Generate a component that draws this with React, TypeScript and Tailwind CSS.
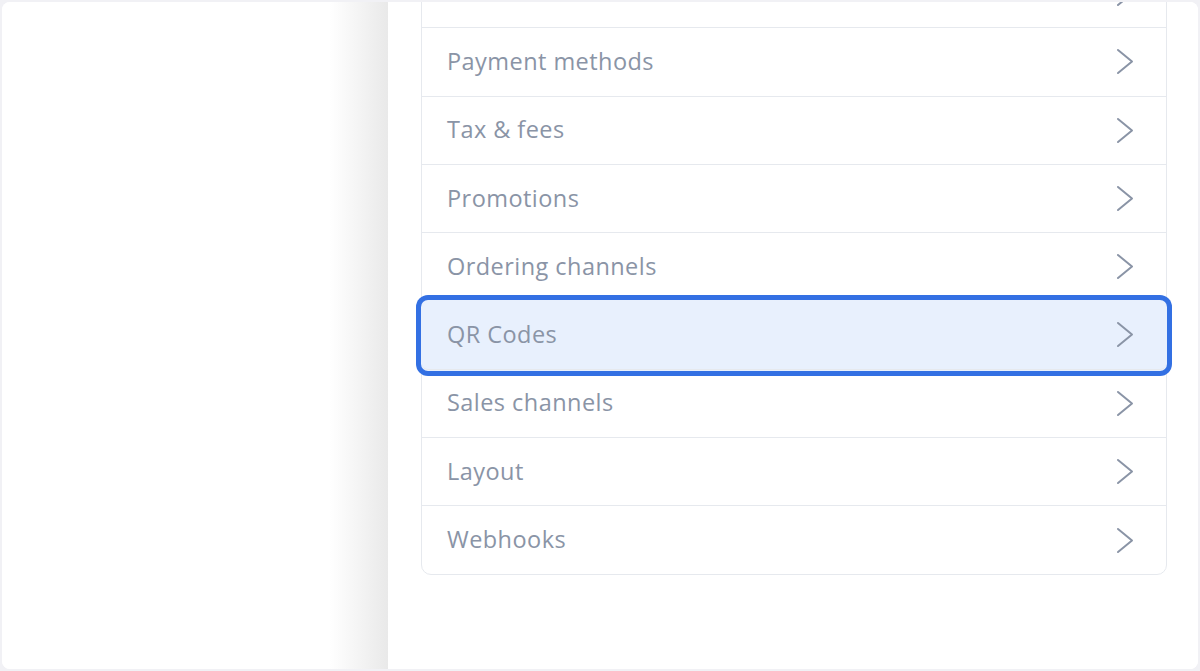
import React from "react";

const items = [
  "",
  "Payment methods",
  "Tax & fees",
  "Promotions",
  "Ordering channels",
  "QR Codes",
  "Sales channels",
  "Layout",
  "Webhooks",
];

function Chevron() {
  return (
    <svg width="18" height="27" viewBox="0 0 18 27" fill="none" className="shrink-0">
      <polyline
        points="2,2 16,13.5 2,25"
        stroke="#8a94a6"
        strokeWidth="2"
        strokeLinecap="round"
        strokeLinejoin="round"
      />
    </svg>
  );
}

export default function App() {
  return (
    <div className="w-[1200px] h-[671px] bg-[#f1f1f5] p-[2px] overflow-hidden" style={{ fontFamily: '"Open Sans", "Liberation Sans", sans-serif' }}>
      <div className="w-full h-full bg-white rounded-[8px] overflow-hidden flex">
        <div className="w-[386px] h-full bg-[linear-gradient(to_right,#ffffff_85%,#e9e9e9)]" />
        <div className="flex-1 h-full pl-[33px] pr-[31px] bg-white">
          <div className="mt-[-43px] border border-[#e6e9ee] rounded-b-[10px] bg-white">
            {items.map((label, i) => {
              const active = label === "QR Codes";
              return (
                <div
                  key={i}
                  className={
                    "relative h-[68.25px] flex items-center justify-between pl-[25px] pr-[32px] " +
                    (i < items.length - 1 ? "border-b border-[#e6e9ee] " : "") +
                    (active
                      ? "z-10 bg-[#e8f0fd] rounded-[6px] shadow-[0_0_0_1px_#e8f0fd,0_0_0_6px_#3370e3]"
                      : "")
                  }
                >
                  <span className="text-[23.5px] leading-none text-[#8a94a6] tracking-[0.45px]">{label}</span>
                  <Chevron />
                </div>
              );
            })}
          </div>
        </div>
      </div>
    </div>
  );
}
